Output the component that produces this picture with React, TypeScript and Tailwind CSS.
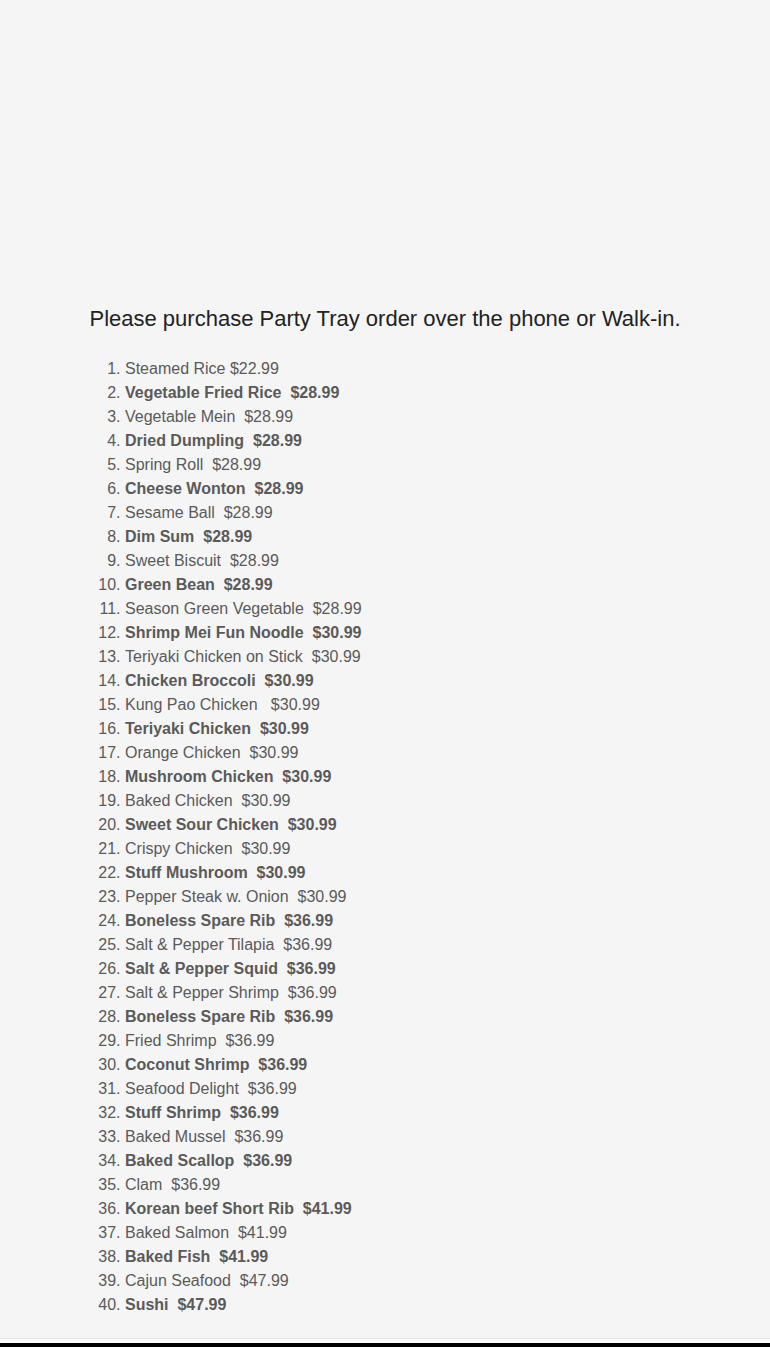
import React from "react";

const items: [string, string, boolean][] = [
  ["Steamed Rice", "$22.99", false],
  ["Vegetable Fried Rice", "$28.99", true],
  ["Vegetable Mein", "$28.99", false],
  ["Dried Dumpling", "$28.99", true],
  ["Spring Roll", "$28.99", false],
  ["Cheese Wonton", "$28.99", true],
  ["Sesame Ball", "$28.99", false],
  ["Dim Sum", "$28.99", true],
  ["Sweet Biscuit", "$28.99", false],
  ["Green Bean", "$28.99", true],
  ["Season Green Vegetable", "$28.99", false],
  ["Shrimp Mei Fun Noodle", "$30.99", true],
  ["Teriyaki Chicken on Stick", "$30.99", false],
  ["Chicken Broccoli", "$30.99", true],
  ["Kung Pao Chicken ", "$30.99", false],
  ["Teriyaki Chicken", "$30.99", true],
  ["Orange Chicken", "$30.99", false],
  ["Mushroom Chicken", "$30.99", true],
  ["Baked Chicken", "$30.99", false],
  ["Sweet Sour Chicken", "$30.99", true],
  ["Crispy Chicken", "$30.99", false],
  ["Stuff Mushroom", "$30.99", true],
  ["Pepper Steak w. Onion", "$30.99", false],
  ["Boneless Spare Rib", "$36.99", true],
  ["Salt & Pepper Tilapia", "$36.99", false],
  ["Salt & Pepper Squid", "$36.99", true],
  ["Salt & Pepper Shrimp", "$36.99", false],
  ["Boneless Spare Rib", "$36.99", true],
  ["Fried Shrimp", "$36.99", false],
  ["Coconut Shrimp", "$36.99", true],
  ["Seafood Delight", "$36.99", false],
  ["Stuff Shrimp", "$36.99", true],
  ["Baked Mussel", "$36.99", false],
  ["Baked Scallop", "$36.99", true],
  ["Clam", "$36.99", false],
  ["Korean beef Short Rib", "$41.99", true],
  ["Baked Salmon", "$41.99", false],
  ["Baked Fish", "$41.99", true],
  ["Cajun Seafood", "$47.99", false],
  ["Sushi", "$47.99", true],
];

export default function App() {
  return (
    <div
      className="min-h-[1347px] bg-[#f5f5f5] flex flex-col"
      style={{ fontFamily: '"Liberation Sans", Arial, sans-serif' }}
    >
      <div className="h-[303px]" />
      <h2 className="text-center text-[22px] leading-[32px] text-[#222222] font-normal">
        Please purchase Party Tray order over the phone or Walk-in.
      </h2>
      <ol className="list-decimal pl-[125px] mt-[22px] text-[16px] leading-[24px] text-[#5a5a5a]">
        {items.map(([name, price, bold], i) => (
          <li key={i}>
            <span className={bold ? "whitespace-pre font-bold" : "whitespace-pre"}>
              {i === 0 ? `${name} ${price}` : `${name}  ${price}`}
            </span>
          </li>
        ))}
      </ol>
      <div className="h-[21px]" />
      <div className="h-px bg-[#e6e6e6]" />
      <div className="h-[4px] bg-[#fafafa]" />
      <div className="flex-1 bg-black min-h-[5px]" />
    </div>
  );
}
